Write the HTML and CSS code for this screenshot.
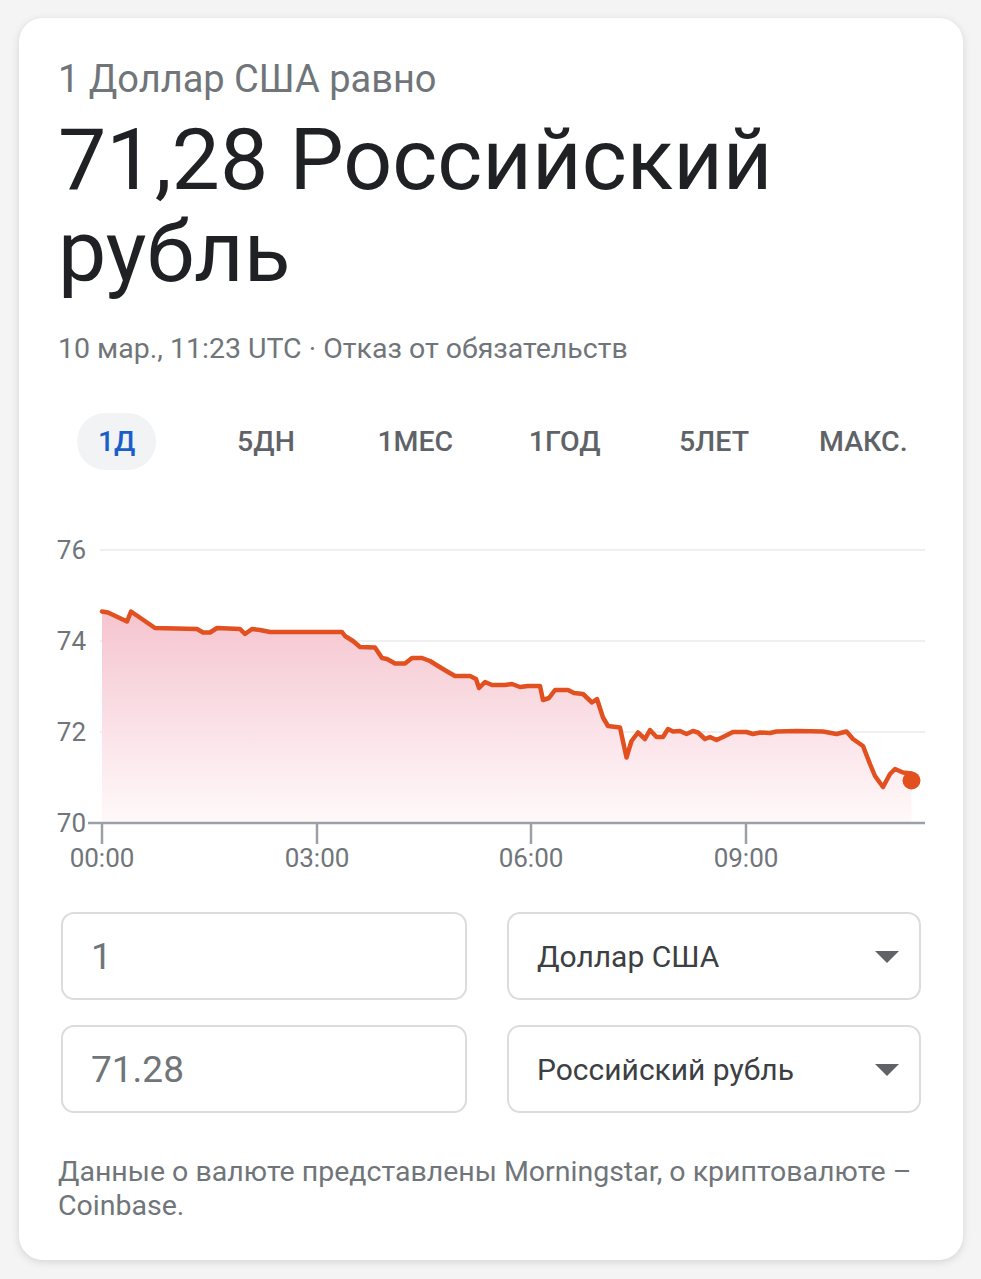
FILE: index.html
```html
<!DOCTYPE html>
<html lang="ru">
<head>
<meta charset="utf-8">
<title>Конвертер валют</title>
<link rel="stylesheet" href="styles.css">
</head>
<body>
<div class="card">
  <div class="eq">1 Доллар США равно</div>
  <div class="result">71,28 Российский рубль</div>
  <div class="meta">10 мар., 11:23 UTC · Отказ от обязательств</div>

  <div class="tabs">
    <div class="tab"><span class="pill active">1Д</span></div>
    <div class="tab"><span class="pill">5ДН</span></div>
    <div class="tab"><span class="pill">1МЕС</span></div>
    <div class="tab"><span class="pill">1ГОД</span></div>
    <div class="tab"><span class="pill">5ЛЕТ</span></div>
    <div class="tab"><span class="pill">МАКС.</span></div>
  </div>

  <div class="chart">
    <svg class="chart-svg" width="944" height="360" viewBox="19 520 944 360">
      <defs>
        <linearGradient id="fillg" x1="0" y1="605" x2="0" y2="822" gradientUnits="userSpaceOnUse">
          <stop offset="0" stop-color="#f5c3ce"/>
          <stop offset="0.55" stop-color="#fae1e7"/>
          <stop offset="1" stop-color="#fff9fa"/>
        </linearGradient>
      </defs>
      <g class="grid">
        <line x1="100" y1="549" x2="925" y2="549"/>
        <line x1="100" y1="640" x2="925" y2="640"/>
        <line x1="100" y1="731" x2="925" y2="731"/>
      </g>
      <path class="area" d="M102,610.5 L108,611.5 L127,620.5 L131,610.5 L155,627 L197,628 L203,631.5 L210,631.5 L217,627 L240,628 L245,633 L252,628 L260,629 L270,631 L342,631 L345,635 L353,640 L360,646 L375,646.5 L382,657 L387,658 L395,662.5 L405,662.5 L412,657 L422,657 L430,660 L438,665 L448,671 L455,675 L470,675 L476,678 L479,687 L485,681 L492,684 L505,684 L512,683 L520,686 L528,685 L540,685 L543,699 L549,697 L555,689 L568,689 L574,692 L583,693 L592,701.5 L597,698 L603,716.5 L608,725 L620,726.5 L626.5,756.5 L631.5,740 L638,731.5 L645,738 L650,729 L656.5,736 L663,736 L668,728 L673,730.5 L680,730 L686.5,733 L693,730 L698,731.5 L705,738 L710,736 L716.5,739 L723,736 L733,731 L746.5,731 L753,733 L760,731.5 L770,732 L776.5,730.5 L796.5,730 L823,730.5 L836.5,733 L846.5,730.5 L853,738 L863,745 L870,763 L875,775 L883,786 L890,773 L895,768 L903,771.5 L911.5,772.5 L911.5,822 L102,822 Z"/>
      <path class="line" d="M102,610.5 L108,611.5 L127,620.5 L131,610.5 L155,627 L197,628 L203,631.5 L210,631.5 L217,627 L240,628 L245,633 L252,628 L260,629 L270,631 L342,631 L345,635 L353,640 L360,646 L375,646.5 L382,657 L387,658 L395,662.5 L405,662.5 L412,657 L422,657 L430,660 L438,665 L448,671 L455,675 L470,675 L476,678 L479,687 L485,681 L492,684 L505,684 L512,683 L520,686 L528,685 L540,685 L543,699 L549,697 L555,689 L568,689 L574,692 L583,693 L592,701.5 L597,698 L603,716.5 L608,725 L620,726.5 L626.5,756.5 L631.5,740 L638,731.5 L645,738 L650,729 L656.5,736 L663,736 L668,728 L673,730.5 L680,730 L686.5,733 L693,730 L698,731.5 L705,738 L710,736 L716.5,739 L723,736 L733,731 L746.5,731 L753,733 L760,731.5 L770,732 L776.5,730.5 L796.5,730 L823,730.5 L836.5,733 L846.5,730.5 L853,738 L863,745 L870,763 L875,775 L883,786 L890,773 L895,768 L903,771.5 L911.5,772.5"/>
      <circle class="dot" cx="911.5" cy="779.5" r="9"/>
      <g class="axis">
        <line x1="88" y1="822" x2="925" y2="822"/>
        <line x1="102" y1="822" x2="102" y2="843"/>
        <line x1="317" y1="822" x2="317" y2="843"/>
        <line x1="531" y1="822" x2="531" y2="843"/>
        <line x1="746" y1="822" x2="746" y2="843"/>
      </g>
      <g class="ylab">
        <text x="86" y="558">76</text>
        <text x="86" y="649">74</text>
        <text x="86" y="740">72</text>
        <text x="86" y="831">70</text>
      </g>
      <g class="xlab">
        <text x="102" y="866">00:00</text>
        <text x="317" y="866">03:00</text>
        <text x="531" y="866">06:00</text>
        <text x="746" y="866">09:00</text>
      </g>
    </svg>
  </div>

  <div class="conv">
    <div class="box num">1</div>
    <div class="box sel"><span>Доллар США</span><span class="caret"></span></div>
    <div class="box num">71.28</div>
    <div class="box sel"><span>Российский рубль</span><span class="caret"></span></div>
  </div>

  <div class="foot">Данные о валюте представлены Morningstar, о криптовалюте – Coinbase.</div>
</div>
</body>
</html>
```

FILE: styles.css
```css
* { box-sizing: border-box; }
html, body { margin: 0; padding: 0; }
body {
  background: #f4f4f4;
  font-family: Roboto, "Noto Sans", Arial, sans-serif;
  width: 981px;
  height: 1279px;
  overflow: hidden;
}
.card {
  margin: 18px 0 0 19px;
  width: 944px;
  height: 1242px;
  background: #fff;
  border-radius: 24px;
  box-shadow: 0 2px 8px rgba(0,0,0,0.13);
  padding: 37px 0 0 39px;
}
.eq {
  font-size: 38px;
  line-height: 48px;
  color: #70757a;
}
.result {
  font-size: 86px;
  line-height: 92px;
  color: #202124;
  margin-top: 11px;
  width: 800px;
}
.meta {
  font-size: 28.5px;
  line-height: 36px;
  color: #70757a;
  margin-top: 33px;
}
.tabs {
  display: flex;
  margin: 46px 0 0 -16px;
  width: 896px;
}
.tab {
  flex: 1;
  display: flex;
  justify-content: center;
}
.pill {
  display: block;
  height: 57px;
  line-height: 57px;
  padding: 0 21px;
  border-radius: 29px;
  font-size: 28.5px;
  font-weight: 500;
  color: #5f6368;
}
.pill.active {
  background: #f1f3f4;
  color: #1a5fc8;
}
.chart {
  margin: 51px 0 0 -39px;
  height: 360px;
}
.chart-svg { display: block; }
.grid line { stroke: #efefef; stroke-width: 2; }
.area { fill: url(#fillg); }
.line { fill: none; stroke: #e2501f; stroke-width: 4.5; stroke-linejoin: round; stroke-linecap: round; }
.dot { fill: #e2501f; }
.axis line { stroke: #9aa0a6; stroke-width: 2.5; }
.ylab text { font-size: 26px; fill: #70757a; text-anchor: end; font-family: Roboto, sans-serif; }
.xlab text { font-size: 26px; fill: #70757a; text-anchor: middle; font-family: Roboto, sans-serif; }
.conv {
  display: grid;
  grid-template-columns: 406px 414px;
  grid-auto-rows: 88px;
  column-gap: 40px;
  row-gap: 25px;
  margin: 31px 0 0 3px;
}
.box {
  border: 2px solid #dadce0;
  border-radius: 13px;
  display: flex;
  align-items: center;
}
.box.num {
  padding-left: 28px;
  font-size: 37px;
  color: #70757a;
}
.box.sel {
  padding: 0 20px 0 28px;
  justify-content: space-between;
  font-size: 30px;
  color: #3c4043;
}
.caret {
  width: 0;
  height: 0;
  border-left: 12px solid transparent;
  border-right: 12px solid transparent;
  border-top: 12px solid #5f6368;
  margin-top: 2px;
}
.foot {
  margin-top: 42px;
  width: 880px;
  font-size: 28.5px;
  line-height: 34px;
  color: #70757a;
}
```
